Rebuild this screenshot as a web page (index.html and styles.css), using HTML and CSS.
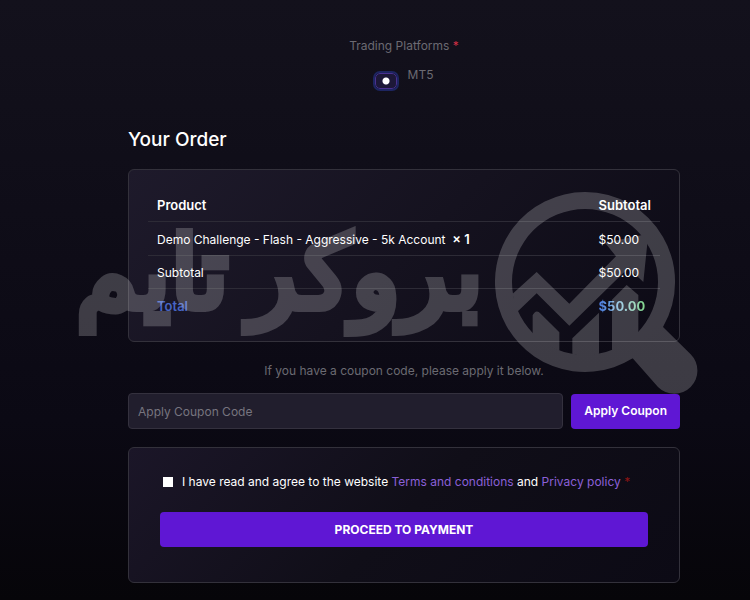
FILE: index.html
```html
<!DOCTYPE html>
<html lang="en">
<head>
<meta charset="utf-8">
<title>Checkout</title>
<link rel="stylesheet" href="styles.css">
</head>
<body>
<main class="checkout">
    <fieldset class="platforms">
        <legend>Trading Platforms <span class="required">*</span></legend>
        <div class="platform">
            <input type="radio" id="mt5" name="platform" value="mt5" checked>
            <label for="mt5">MT5</label>
        </div>
    </fieldset>

    <h1>Your Order</h1>
    <section class="box order">
        <table>
            <thead>
                <tr><th>Product</th><th class="price">Subtotal</th></tr>
            </thead>
            <tbody>
                <tr><td>Demo Challenge - Flash - Aggressive - 5k Account&nbsp; <strong>× 1</strong></td><td>$50.00</td></tr>
                <tr><td>Subtotal</td><td>$50.00</td></tr>
                <tr class="total"><td><span class="total-label">Total</span></td><td><span class="total-price">$50.00</span></td></tr>
            </tbody>
        </table>
    </section>

    <form class="coupon">
        <label for="coupon">If you have a coupon code, please apply it below.</label>
        <div class="coupon-row">
            <input type="text" id="coupon" placeholder="Apply Coupon Code">
            <button type="button">Apply Coupon</button>
        </div>
    </form>

    <form class="box payment">
        <div class="terms">
            <input type="checkbox" id="terms">
            <label for="terms">I have read and agree to the website <a href="#">Terms and conditions</a> and <a href="#">Privacy policy</a> <span class="required-dark">*</span></label>
        </div>
        <button type="submit">PROCEED TO PAYMENT</button>
    </form>
</main>

<div class="watermark">
    <div class="brand" lang="fa" dir="rtl"><span>بروکر</span> <span>تایم</span></div>
    <svg viewBox="45 65 609 609" aria-hidden="true">
        <path fill-rule="evenodd" d="M315 65a270 270 0 0 1 234 405L632 552A69 69 0 0 1 534 650L458 564A270 270 0 1 1 315 65ZM315 116a219 219 0 1 0 0 438a219 219 0 1 0 0-438Z"/>
        <path d="M98 370L170 305L268 400L408 258L375 217L505 190L490 335L445 293L268 466L170 369L108 428Z"/>
        <path d="M158 500V435Q168 415 182 430L238 486V542L190 520Z"/>
        <path d="M277 504L357 427V550L315 560L277 550Z"/>
        <path d="M396 388L440 344L475 374V490L540 500L458 564L396 538Z"/>
    </svg>
</div>
</body>
</html>
```
FILE: styles.css
```css
* {
    box-sizing: border-box;
}

body {
    margin: 0;
    min-height: 100vh;
    background: linear-gradient(#13111c, #0b0914 70%, #060509);
    color: #fff;
    font: 12px/20px Inter, "Liberation Sans", sans-serif;
    position: relative;
}

.checkout {
    padding: 36px 70px 16px 128px;
}

.platforms {
    margin: 0;
    padding: 0;
    border: 0;
    color: #6b6a72;
    text-align: center;
}

.platforms legend {
    width: 100%;
    padding: 0;
}

.required {
    color: #d02f45;
}

.required-dark {
    color: #8c1414;
}

.platform {
    display: flex;
    justify-content: center;
    gap: 11px;
    margin-top: 9px;
}

.platform input {
    appearance: none;
    width: 22px;
    height: 16px;
    margin: 8px 0 0;
    border: 1px solid #49308f;
    border-radius: 5px;
    outline: 2px solid #1d2560;
    background: radial-gradient(circle, #fff 3px, #1d1838 4px);
}

h1 {
    margin: 38px 0 16px;
    font-size: 19px;
    font-weight: 500;
    line-height: 26px;
}

.box {
    border: 1px solid #33313b;
    border-radius: 6px;
    background: linear-gradient(135deg, #1b1628, #100e18 50%, #0c0a15);
}

.order {
    padding: 18px 19px 20px;
    background: linear-gradient(135deg, #1e1a2b, #15121f 50%, #0c0a15);
}

table {
    width: 100%;
    border-collapse: collapse;
}

th, td {
    padding: 7px 9px 6px;
    text-align: left;
}

tbody td {
    padding-bottom: 5px;
    border-top: 1px solid #2d2b36;
}

th, strong, .total {
    font-size: 13px;
    font-weight: 600;
}

.price {
    width: 69px;
}

.total-label {
    color: #4765c4;
}

.total-price {
    background: linear-gradient(90deg, #4a7be0, #8ac4d8 50%, #84d68c);
    background-clip: text;
    color: transparent;
    font-weight: 700;
}

.coupon {
    margin: 19px 0 18px;
    text-align: center;
}

.coupon label {
    display: block;
    margin-bottom: 12px;
    color: #6b6a72;
}

.coupon-row {
    display: flex;
    align-items: center;
    gap: 8px;
}

.coupon-row input {
    flex: 1;
    min-width: 0;
    height: 36px;
    padding: 0 9px;
    border: 1px solid #34313e;
    border-radius: 4px;
    background: #211e2d;
    color: #fff;
    font: inherit;
}

.coupon-row input::placeholder {
    color: #77757f;
}

button {
    height: 35px;
    padding: 0 13px;
    border: 0;
    border-radius: 4px;
    background: #5f17d4;
    color: #fff;
    font: inherit;
    font-weight: 600;
}

.payment {
    padding: 24px 31px 35px;
}

.terms {
    display: flex;
    align-items: center;
    gap: 9px;
    margin-bottom: 20px;
}

.terms input {
    appearance: none;
    width: 10px;
    height: 10px;
    margin: 0 0 0 3px;
    background: #fff;
}

.terms a {
    color: #8b60d8;
    text-decoration: none;
}

.payment button {
    width: 100%;
    font-weight: 700;
}

/* brand mark laid over the page */
.watermark {
    position: absolute;
    top: 192px;
    left: 76px;
    display: flex;
    align-items: flex-start;
    gap: 12px;
    opacity: 0.2;
    pointer-events: none;
}

.brand {
    display: flex;
    justify-content: space-between;
    width: 407px;
    font: 100px/164px "DejaVu Sans", sans-serif;
    white-space: nowrap;
    -webkit-text-stroke: 8px #fff;
}

.watermark svg {
    width: 203px;
    height: 203px;
    fill: #fff;
}
```
